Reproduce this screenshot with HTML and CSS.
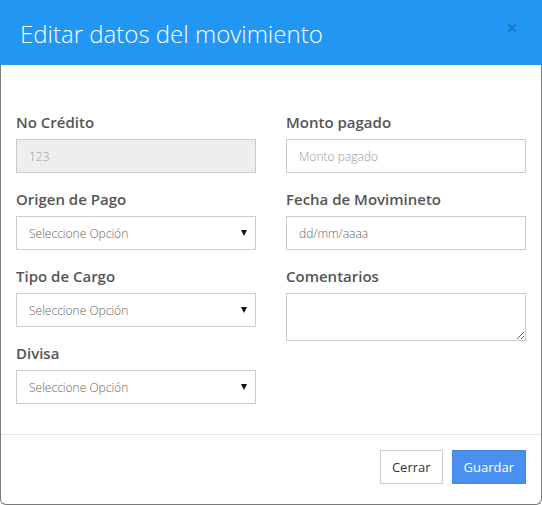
FILE: index.html
```html
<!DOCTYPE html>
<html lang="es">
<head>
<meta charset="utf-8">
<title>Editar datos del movimiento</title>
<link rel="stylesheet" href="styles.css">
</head>
<body>
<div class="modal">
  <div class="modal-header">
    <h4 class="modal-title">Editar datos del movimiento</h4>
    <button class="close" type="button">×</button>
  </div>
  <div class="modal-body">
    <div class="col">
      <div class="form-group">
        <label class="lbl">No Crédito</label>
        <input class="ctl" type="text" value="123" disabled>
      </div>
      <div class="form-group">
        <label class="lbl">Origen de Pago</label>
        <div class="sel-wrap"><select class="ctl sel"><option>Seleccione Opción</option></select></div>
      </div>
      <div class="form-group">
        <label class="lbl">Tipo de Cargo</label>
        <div class="sel-wrap"><select class="ctl sel"><option>Seleccione Opción</option></select></div>
      </div>
      <div class="form-group">
        <label class="lbl">Divisa</label>
        <div class="sel-wrap"><select class="ctl sel"><option>Seleccione Opción</option></select></div>
      </div>
    </div>
    <div class="col">
      <div class="form-group">
        <label class="lbl">Monto pagado</label>
        <input class="ctl" type="text" placeholder="Monto pagado">
      </div>
      <div class="form-group">
        <label class="lbl">Fecha de Movimineto</label>
        <input class="ctl date" type="text" placeholder="dd/mm/aaaa">
      </div>
      <div class="form-group">
        <label class="lbl">Comentarios</label>
        <textarea class="ctl area"></textarea>
      </div>
    </div>
  </div>
  <div class="modal-footer">
    <button class="btn btn-default" type="button">Cerrar</button>
    <button class="btn btn-primary" type="button">Guardar</button>
  </div>
</div>
</body>
</html>
```
FILE: styles.css
```css
html, body {
  margin: 0;
  padding: 0;
  background: #fff;
}
body {
  font-family: "Open Sans", "DejaVu Sans", sans-serif;
  width: 542px;
  height: 505px;
  overflow: hidden;
}
.modal {
  box-sizing: border-box;
  width: 542px;
  height: 505px;
  border: 1px solid #7a7a7a;
  border-top: none;
  border-radius: 0 0 6px 6px;
  display: flex;
  flex-direction: column;
  background: #fff;
}
.modal-header {
  margin: 0 -1px;
  height: 65px;
  flex: none;
  background: #2196f3;
  display: flex;
  align-items: center;
  justify-content: space-between;
  padding: 0 24px 0 20px;
  box-sizing: border-box;
}
.modal-title {
  margin: 0;
  padding-top: 2px;
  font-family: "Open Sans", sans-serif;
  font-weight: 300;
  font-size: 24px;
  line-height: 30px;
  color: #fff;
}
.close {
  border: 0;
  background: transparent;
  padding: 0;
  margin-top: -10px;
  font-family: "Open Sans", sans-serif;
  font-size: 20px;
  font-weight: 700;
  line-height: 1;
  color: #000;
  opacity: 0.2;
}
.modal-body {
  flex: 1;
  padding: 47px 15px 0 15px;
  display: grid;
  grid-template-columns: 240px 240px;
  column-gap: 30px;
  align-items: start;
}
.col {
  display: flex;
  flex-direction: column;
}
.form-group {
  display: flex;
  flex-direction: column;
  margin-bottom: 16px;
}
.lbl {
  display: block;
  font-size: 15px;
  font-weight: 600;
  line-height: 20px;
  color: #555;
  margin-bottom: 7px;
}
.ctl {
  box-sizing: border-box;
  width: 240px;
  height: 34px;
  margin: 0;
  padding: 6px 12px;
  border: 1px solid #ccc;
  border-radius: 0;
  background: #fff;
  font-family: "Open Sans", sans-serif;
  font-size: 12px;
  font-weight: 300;
  color: #555;
  outline: none;
}
.ctl:disabled {
  background: #eee;
  color: #999;
}
.ctl::placeholder {
  color: #999;
  opacity: 1;
}
.date::placeholder {
  color: #666;
}
.sel-wrap {
  position: relative;
  width: 240px;
}
.sel {
  -webkit-appearance: none;
  appearance: none;
  color: #666;
}
.sel-wrap::after {
  content: "";
  position: absolute;
  right: 9px;
  top: 14px;
  border-left: 3.5px solid transparent;
  border-right: 3.5px solid transparent;
  border-top: 6px solid #111;
  pointer-events: none;
}
.area {
  height: 48px;
  resize: vertical;
}
.modal-footer {
  box-sizing: border-box;
  flex: none;
  border-top: 1px solid #e5e5e5;
  padding: 15px 15px 0 15px;
  height: 70px;
  display: flex;
  justify-content: flex-end;
  align-items: flex-start;
  gap: 9px;
}
.btn {
  box-sizing: border-box;
  height: 34px;
  padding: 0 11px;
  font-family: "Open Sans", sans-serif;
  font-size: 13px;
  font-weight: 400;
  line-height: 32px;
  border-radius: 0;
  cursor: pointer;
}
.btn-default {
  background: #fff;
  border: 1px solid #ccc;
  color: #333;
}
.btn-primary {
  background: #4a90f0;
  border: 1px solid #4286e6;
  color: #fff;
}
```
